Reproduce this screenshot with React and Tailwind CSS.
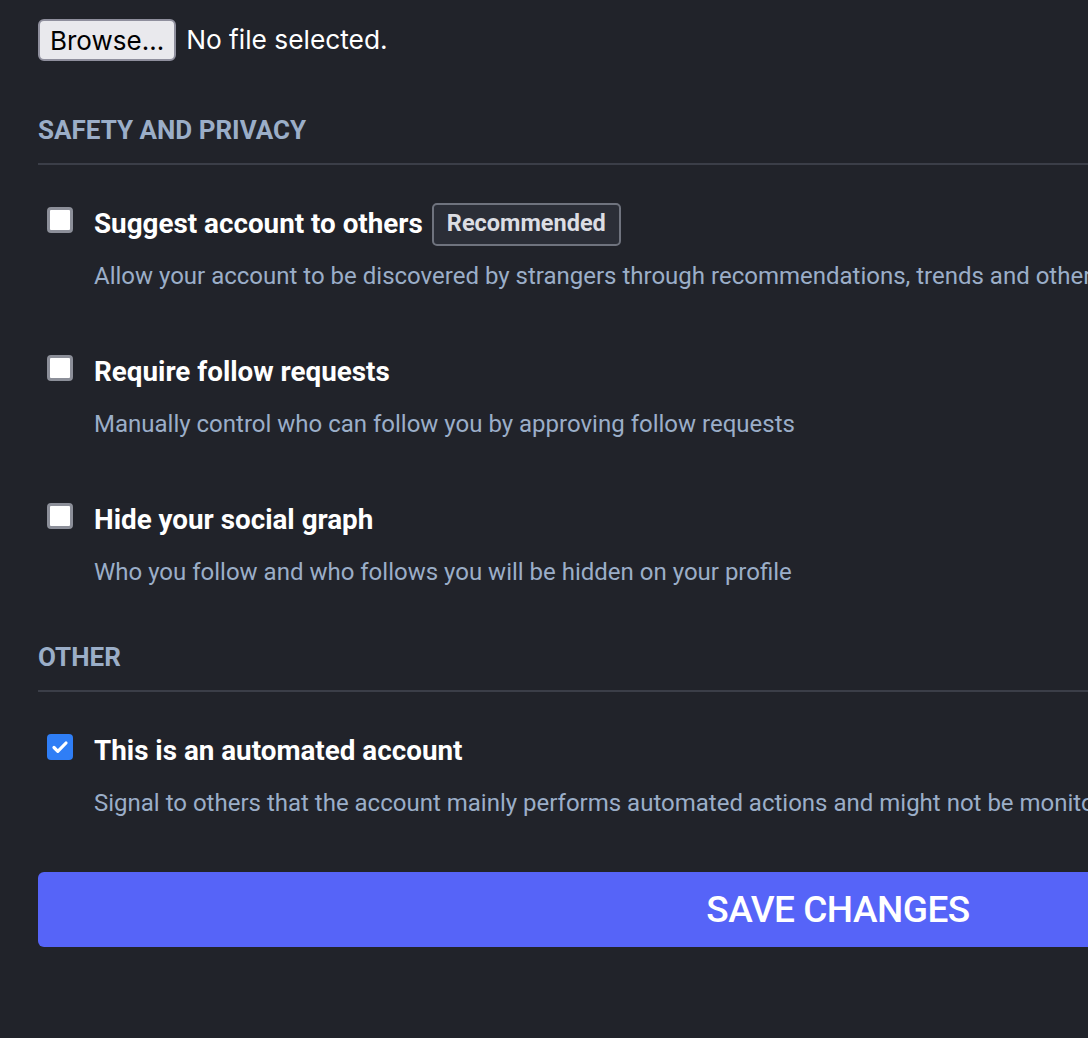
import React, { useState } from 'react';

const roboto = { fontFamily: 'Roboto, "Noto Sans", sans-serif' };
const system = { fontFamily: 'Inter, "Liberation Sans", sans-serif' };

function Box({ checked, onChange }) {
  return (
    <button
      type="button"
      onClick={onChange}
      className={
        'w-[26px] h-[26px] shrink-0 rounded-[4px] flex items-center justify-center ' +
        (checked ? 'bg-[#2f7ef6]' : 'bg-white border-[3px] border-[#8c8f99]')
      }
    >
      {checked && (
        <svg width="20" height="20" viewBox="0 0 20 20" fill="none">
          <path d="M4 10.5l3.8 3.8L16 6" stroke="white" strokeWidth="3.2" strokeLinecap="round" strokeLinejoin="round" />
        </svg>
      )}
    </button>
  );
}

function Setting({ label, hint, badge, checked, onChange, className }) {
  return (
    <div className={'flex flex-col ' + className}>
      <div className="flex items-center h-[36px]">
        <div className="w-[56px] pl-[9px] -mt-[8px]">
          <Box checked={checked} onChange={onChange} />
        </div>
        <span className="text-[27.8px] font-bold text-white leading-[36px]">{label}</span>
        {badge && (
          <span className="ml-[9px] h-[43px] px-[13px] flex items-center rounded-[5px] border-2 border-[#6f737e] bg-[#2b2e37] text-[23.5px] font-bold text-[#dcdde3]">
            {badge}
          </span>
        )}
      </div>
      <p className="mt-[19px] pl-[56px] text-[24px] leading-[30px] text-[#9baec8] whitespace-nowrap">{hint}</p>
    </div>
  );
}

export default function App() {
  const [vals, setVals] = useState({ suggest: false, locked: false, graph: false, bot: true });
  const flip = (k) => setVals((v) => ({ ...v, [k]: !v[k] }));

  return (
    <div className="w-full h-[1038px] overflow-hidden bg-[#21232a]" style={roboto}>
      <div className="w-[1638px] pl-[38px] pt-[19px]">
        <div className="flex items-center gap-[10px]">
          <button
            className="h-[42px] px-[10px] rounded-[6px] bg-[#e9e9ed] border-2 border-[#8f8f9d] text-[26px] text-black"
            style={system}
          >
            Browse…
          </button>
          <span className="text-[26.3px] text-white" style={system}>
            No file selected.
          </span>
        </div>

        <h4 className="mt-[51px] text-[26px] leading-[36px] font-bold uppercase text-[#9baec8] pb-[15px] border-b-2 border-[#3b3e48]">
          Safety and privacy
        </h4>

        <Setting
          className="mt-[41px]"
          label="Suggest account to others"
          badge="Recommended"
          hint="Allow your account to be discovered by strangers through recommendations, trends and other features"
          checked={vals.suggest}
          onChange={() => flip('suggest')}
        />
        <Setting
          className="mt-[63px]"
          label="Require follow requests"
          hint="Manually control who can follow you by approving follow requests"
          checked={vals.locked}
          onChange={() => flip('locked')}
        />
        <Setting
          className="mt-[63px]"
          label="Hide your social graph"
          hint="Who you follow and who follows you will be hidden on your profile"
          checked={vals.graph}
          onChange={() => flip('graph')}
        />

        <h4 className="mt-[52px] text-[26px] leading-[36px] font-bold uppercase text-[#9baec8] pb-[15px] border-b-2 border-[#3b3e48]">
          Other
        </h4>

        <Setting
          className="mt-[41px]"
          label="This is an automated account"
          hint="Signal to others that the account mainly performs automated actions and might not be monitored"
          checked={vals.bot}
          onChange={() => flip('bot')}
        />

        <button className="mt-[54px] w-full h-[75px] rounded-[6px] bg-[#5664f8] text-white text-[37px] font-medium uppercase tracking-[-0.5px]">
          Save changes
        </button>
      </div>
    </div>
  );
}
